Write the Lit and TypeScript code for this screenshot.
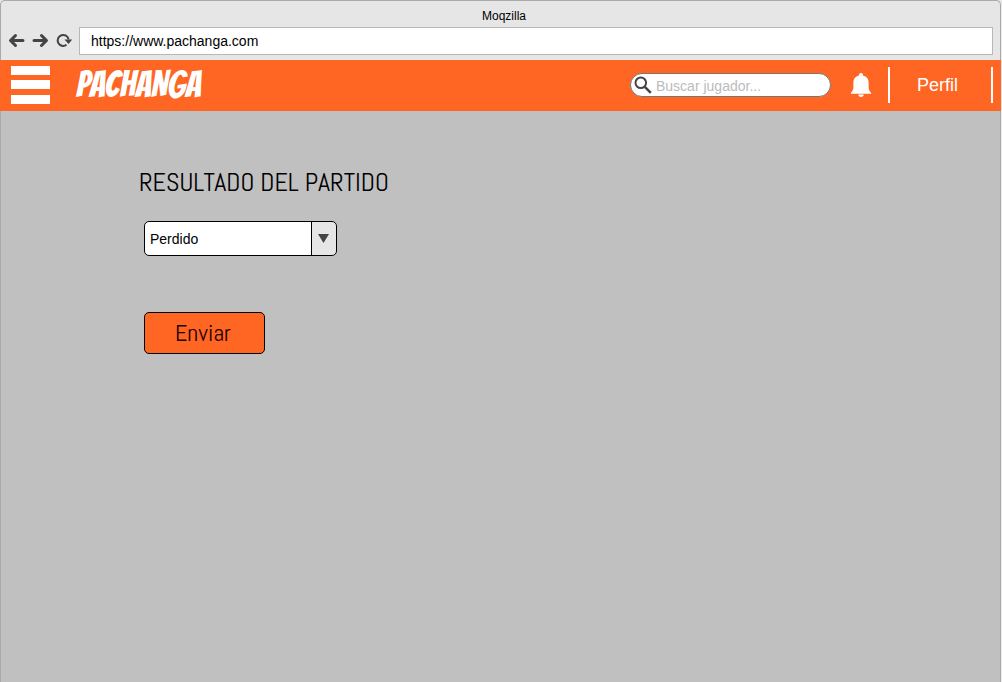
import { LitElement, html, css } from "lit";
import { customElement, state } from "lit/decorators.js";

@customElement("browser-bar")
class BrowserBar extends LitElement {
  static styles = css`
    :host { display: block; font-family: "Liberation Sans", Arial, sans-serif; color: #000; }
    .chrome {
      box-sizing: border-box;
      background: #e6e6e6;
      border: 1px solid #aaa;
      border-bottom: 0;
      border-radius: 5px 5px 0 0;
      padding: 8px 7px 5px;
    }
    .title { font-size: 12px; line-height: 14px; text-align: center; margin-bottom: 4px; padding-left: 7px; }
    .tools { display: flex; align-items: center; }
    .nav { display: flex; gap: 7px; margin-right: 6px; }
    .nav button { border: 0; padding: 0; background: none; width: 17px; height: 18px; }
    svg { display: block; }
    .url {
      box-sizing: border-box;
      flex: 1;
      min-width: 0;
      height: 28px;
      padding: 0 11px;
      border: 1px solid #b8b8b8;
      background: #fff;
      font: 14px "Liberation Sans", Arial, sans-serif;
      color: #000;
      outline: 0;
    }
  `;
  render() {
    return html`
      <div class="chrome">
        <div class="title">Moqzilla</div>
        <div class="tools">
          <nav class="nav">
            <button aria-label="Atrás">
              <svg width="17" height="18" viewBox="0 0 17 18" fill="none" stroke="#444" stroke-width="3" stroke-linecap="round" stroke-linejoin="round">
                <path d="M7.500 3.500L2.500 8.500l5 5M3 8.500h12" />
              </svg>
            </button>
            <button aria-label="Adelante">
              <svg width="17" height="18" viewBox="0 0 17 18" fill="none" stroke="#444" stroke-width="3" stroke-linecap="round" stroke-linejoin="round">
                <path d="M9.500 3.500L14.500 8.500l-5 5M14 8.500H2" />
              </svg>
            </button>
            <button aria-label="Recargar">
              <svg width="17" height="18" viewBox="0 0 17 18">
                <path d="M10.500 12.800A5.500 5.500 0 1 1 12.600 7.500" fill="none" stroke="#444" stroke-width="2" />
                <path d="M8.400 7.400H16.200L12.600 12z" fill="#444" />
              </svg>
            </button>
          </nav>
          <input class="url" aria-label="Dirección" value="https://www.pachanga.com" />
        </div>
      </div>
    `;
  }
}

@customElement("site-header")
class SiteHeader extends LitElement {
  static styles = css`
    :host { display: block; font-family: "Liberation Sans", Arial, sans-serif; }
    .bar { box-sizing: border-box; display: flex; align-items: center; height: 51px; padding: 0 8px 2px 11px; background: #ff6624; }
    .menu {
      display: flex;
      flex-direction: column;
      justify-content: space-between;
      width: 39px;
      height: 38px;
      padding: 0;
      border: 0;
      background: none;
    }
    .line { display: block; width: 100%; height: 9px; background: #fff; }
    .logo {
      margin-left: 26px;
      font: 36px/40px Bangers, "Liberation Sans Narrow", "Liberation Sans", sans-serif;
      color: #fff;
      text-decoration: none;
    }
    .search {
      box-sizing: border-box;
      display: flex;
      align-items: center;
      gap: 4px;
      width: 201px;
      height: 24px;
      margin-left: auto;
      padding: 0 8px 0 3px;
      border: 1px solid #777;
      border-radius: 12px;
      background: #fff;
    }
    .field {
      flex: 1;
      min-width: 0;
      padding: 2px 0 0;
      border: 0;
      outline: 0;
      background: none;
      font: 14px "Liberation Sans", Arial, sans-serif;
    }
    .field::placeholder { color: #bbb; opacity: 1; }
    svg { display: block; flex: none; }
    .bell { margin: 0 16px 0 19px; padding: 0; border: 0; background: none; }
    .profile {
      box-sizing: border-box;
      width: 105px;
      border: solid #fff;
      border-width: 0 2px;
      font-size: 18px;
      line-height: 36px;
      padding-left: 27px;
      color: #fff;
      text-decoration: none;
    }
  `;
  render() {
    return html`
      <header class="bar">
        <button class="menu" aria-label="Menú">
          <span class="line"></span><span class="line"></span><span class="line"></span>
        </button>
        <a class="logo" href="#">PACHANGA</a>
        <label class="search">
          <svg width="18" height="18" viewBox="0 0 18 18" fill="none" stroke="#444">
            <circle cx="6.800" cy="6.800" r="5.300" stroke-width="2" />
            <path d="M10.800 10.800L16.800 16.800" stroke-width="2.500" />
          </svg>
          <input class="field" type="text" aria-label="Buscar jugador" placeholder="Buscar jugador..." />
        </label>
        <button class="bell" aria-label="Notificaciones">
          <svg width="22" height="24" viewBox="0 0 22 24" fill="#fff">
            <path d="M11 0a2 2 0 0 1 2 2v.5c3.700.8 5.600 3.600 5.600 7.200v4.800c0 2.500 1.400 4.100 2.600 5.500v.8H.8V20c1.200-1.400 2.600-3 2.600-5.500V9.700C3.400 6.100 5.300 3.300 9 2.500V2a2 2 0 0 1 2-2z" />
            <path d="M8.300 21.600h5.400a2.700 2.300 0 0 1-5.400 0z" />
          </svg>
        </button>
        <a class="profile" href="#">Perfil</a>
      </header>
    `;
  }
}

@customElement("app-root")
class AppRoot extends LitElement {
  @state() result = "Perdido";

  static styles = css`
    :host { display: block; background: #e8e8e8; }
    .window { display: flex; flex-direction: column; min-height: 100vh; margin-right: 1px; }
    .page {
      box-sizing: border-box;
      flex: 1;
      padding: 56px 138px 40px;
      border: solid #aaa;
      border-width: 0 1px;
      background: #c0c0c0;
    }
    .heading {
      margin: 0;
      font: 26px/32px Abel, "Liberation Sans Narrow", "Liberation Sans", sans-serif;
      color: #000;
    }
    .form { display: flex; flex-direction: column; align-items: flex-start; gap: 56px; margin: 22px 0 0 5px; }
    .picker { position: relative; display: block; width: 193px; }
    .select {
      box-sizing: border-box;
      display: block;
      width: 100%;
      height: 35px;
      padding: 0 32px 0 5px;
      border: 1px solid #000;
      border-radius: 5px;
      appearance: none;
      background: linear-gradient(90deg, transparent calc(100% - 25px), #000 calc(100% - 25px), #000 calc(100% - 24px), #e6e6e6 calc(100% - 24px)), #fff;
      font: 14px "Liberation Sans", Arial, sans-serif;
      color: #000;
    }
    .arrow { position: absolute; right: 8px; top: 13px; pointer-events: none; }
    .send {
      box-sizing: border-box;
      width: 121px;
      height: 42px;
      padding: 0 3px 0 0;
      border: 1px solid #000;
      border-radius: 5px;
      background: #ff6624;
      font: 24px/32px Abel, "Liberation Sans Narrow", "Liberation Sans", sans-serif;
      color: #200;
    }
  `;

  private change(e: Event) {
    this.result = (e.target as HTMLSelectElement).value;
  }

  render() {
    const options = ["Ganado", "Empatado", "Perdido"];
    return html`
      <div class="window">
        <browser-bar></browser-bar>
        <site-header></site-header>
        <main class="page">
          <h1 class="heading" id="title">RESULTADO DEL PARTIDO</h1>
          <form class="form" @submit=${(e: Event) => e.preventDefault()}>
            <span class="picker">
              <select class="select" aria-labelledby="title" @change=${this.change}>
                ${options.map((o) => html`<option ?selected=${o === this.result}>${o}</option>`)}
              </select>
              <svg class="arrow" width="11" height="9" viewBox="0 0 11 9"><path d="M0 0h11L5.500 9z" fill="#444" /></svg>
            </span>
            <button class="send">Enviar</button>
          </form>
        </main>
      </div>
    `;
  }
}
